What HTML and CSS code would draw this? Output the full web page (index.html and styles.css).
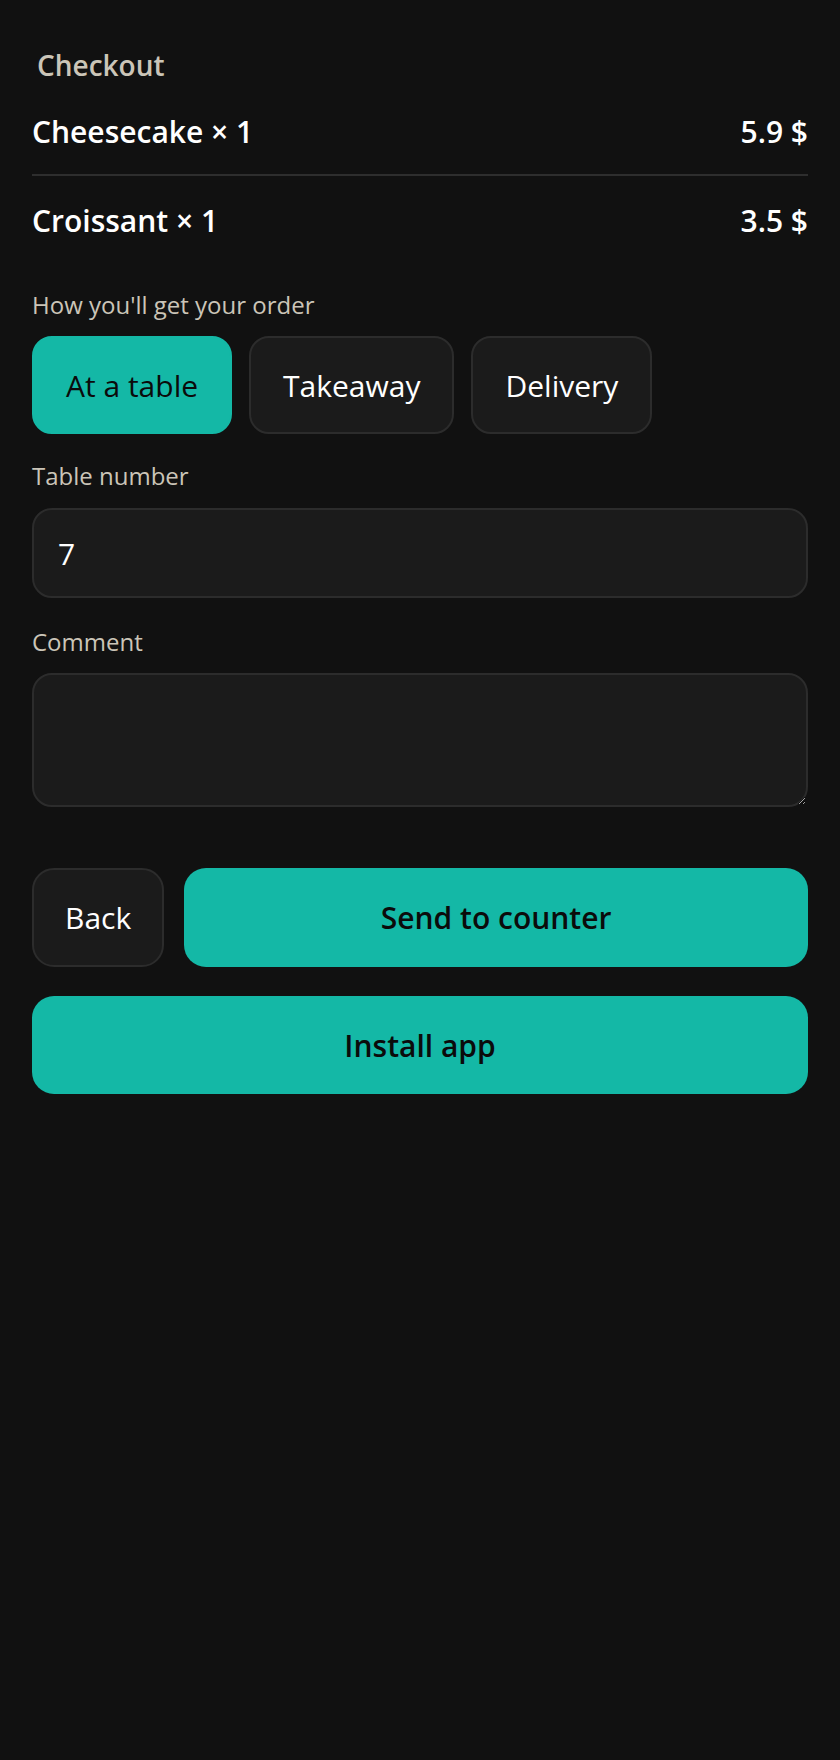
FILE: index.html
```html
<!DOCTYPE html>
<html lang="en">
<head>
<meta charset="utf-8">
<title>Checkout</title>
<link rel="stylesheet" href="styles.css">
</head>
<body>
<main class="checkout">
  <h1 class="title">Checkout</h1>
  <ul class="items">
    <li class="item"><span class="item-name">Cheesecake × 1</span><span class="item-price">5.9 $</span></li>
    <li class="item"><span class="item-name">Croissant × 1</span><span class="item-price">3.5 $</span></li>
  </ul>

  <section class="field field-type">
    <div class="label">How you'll get your order</div>
    <div class="options">
      <button class="option active" type="button">At a table</button>
      <button class="option" type="button">Takeaway</button>
      <button class="option" type="button">Delivery</button>
    </div>
  </section>

  <section class="field field-table">
    <label class="label" for="table">Table number</label>
    <input class="input" id="table" type="text" value="7">
  </section>

  <section class="field field-comment">
    <label class="label" for="comment">Comment</label>
    <textarea class="textarea" id="comment"></textarea>
  </section>

  <div class="actions">
    <button class="btn btn-secondary" type="button">Back</button>
    <button class="btn btn-primary btn-grow" type="button">Send to counter</button>
  </div>
  <button class="btn btn-primary btn-block" type="button">Install app</button>
</main>
</body>
</html>
```

FILE: styles.css
```css
* {
  box-sizing: border-box;
}

body {
  margin: 0;
  background: #111111;
  color: #ffffff;
  font-family: "Open Sans", "Noto Sans", sans-serif;
}

.checkout {
  padding: 47px 32px 0;
}

.title {
  margin: 0 0 7px;
  padding-left: 5px;
  font-size: 28px;
  line-height: 36px;
  font-weight: 600;
  color: #cbc5b8;
}

.items {
  list-style: none;
  margin: 0;
  padding: 0;
}

.item {
  display: flex;
  justify-content: space-between;
  padding: 22px 0;
  font-size: 30px;
  line-height: 40px;
  font-weight: 600;
  color: #ffffff;
}

.item:not(:last-child) {
  border-bottom: 2px solid #2e2e2e;
}

.item + .item {
  padding-top: 25px;
  padding-bottom: 20px;
}

.field-type {
  margin-top: 28px;
}

.field-table {
  margin-top: 26px;
}

.field-comment {
  margin-top: 28px;
}

.label {
  display: block;
  margin-bottom: 15px;
  font-size: 24px;
  line-height: 32px;
  color: #cbc5b8;
}

.field-table .label {
  margin-bottom: 16px;
}

.options {
  display: flex;
  gap: 17px;
}

.option {
  height: 98px;
  padding: 0 32px;
  border: 2px solid #2c2c2c;
  border-radius: 20px;
  background: #1b1b1b;
  color: #ffffff;
  font-family: inherit;
  font-size: 30px;
  font-weight: 400;
}

.option.active {
  background: #14b8a6;
  border-color: #14b8a6;
  color: #0b0b0b;
}

.input,
.textarea {
  display: block;
  width: 100%;
  border: 2px solid #2c2c2c;
  border-radius: 20px;
  background: #1b1b1b;
  color: #ffffff;
  font-family: inherit;
  font-size: 30px;
  outline: none;
}

.input {
  height: 90px;
  padding: 0 24px;
}

.textarea {
  height: 134px;
  padding: 18px 24px;
  resize: vertical;
}

.actions {
  display: flex;
  gap: 20px;
  margin-top: 61px;
}

.btn {
  height: 99px;
  border-radius: 22px;
  font-family: inherit;
  font-size: 30px;
}

.btn-secondary {
  padding: 0 31px;
  border: 2px solid #2c2c2c;
  background: #1b1b1b;
  color: #ffffff;
  font-weight: 400;
}

.btn-primary {
  border: none;
  background: #14b8a6;
  color: #0b0b0b;
  font-weight: 600;
}

.btn-grow {
  flex: 1;
}

.btn-block {
  display: block;
  width: 100%;
  height: 98px;
  margin-top: 29px;
}
```
